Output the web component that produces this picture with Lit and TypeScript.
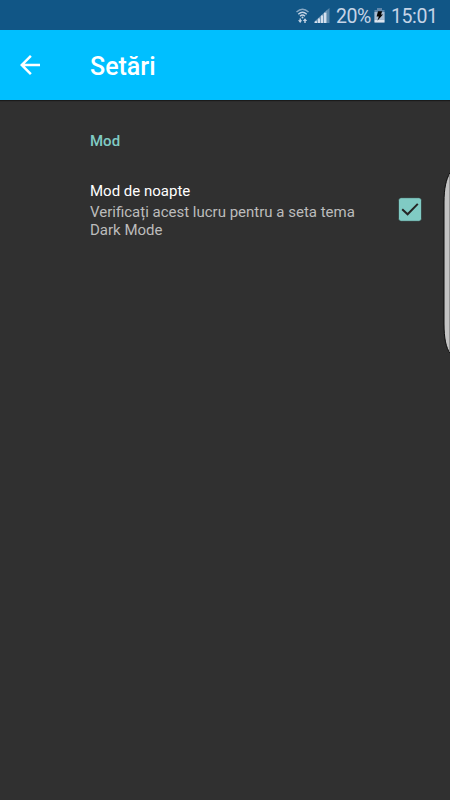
import { LitElement, html, css } from "lit";
import { customElement } from "lit/decorators.js";

@customElement("app-root")
export class AppRoot extends LitElement {
  static styles = css`
    :host {
      display: flex;
      flex-direction: column;
      position: relative;
      height: 100vh;
      overflow: hidden;
      background: #303030;
      font-family: Roboto, sans-serif;
      color: #fff;
    }
    svg { display: block; flex: none; }
    .status {
      flex: none;
      display: flex;
      align-items: center;
      box-sizing: border-box;
      height: 30px;
      padding: 1px 0 0 296px;
      background: #115686;
      color: #c5d4e6;
      font-size: 19.5px;
      line-height: 28px;
      white-space: nowrap;
    }
    .wifi { margin-right: 5px; }
    .signal { margin-right: 6px; }
    .percent { width: 38px; margin-top: 2px; letter-spacing: -0.4px; }
    .battery { margin-right: 6px; }
    .clock { margin-top: 2px; letter-spacing: -0.4px; }
    .bar {
      flex: none;
      display: flex;
      align-items: center;
      height: 70px;
      padding-left: 20px;
      background: #00bfff;
      box-shadow: 0 1px 1px #1b1b1b;
    }
    .title {
      margin: 4px 0 0 50px;
      font-size: 25px;
      line-height: 30px;
      font-weight: 500;
    }
    .content { padding: 32px 28px 0 90px; }
    .category {
      font-size: 15px;
      line-height: 18px;
      font-weight: 500;
      color: #80cbc4;
    }
    .row {
      display: flex;
      align-items: center;
      justify-content: space-between;
      margin-top: 32px;
    }
    .name { font-size: 15px; line-height: 19px; }
    .summary {
      width: 275px;
      margin-top: 2px;
      font-size: 15px;
      line-height: 18px;
      color: #bcbcbc;
    }
    .check { margin-bottom: 3px; }
    .edge {
      position: absolute;
      right: 0;
      top: 172px;
    }
  `;

  render() {
    return html`
      <div class="status">
        <svg class="wifi" width="13" height="16" viewBox="0 0 13 16" fill="none" stroke="#c5d4e6" stroke-width="1.4">
          <path d="M.5 4Q6.5-1.6 12.5 4" opacity=".65" />
          <path d="M2.3 6.2Q6.5 2.3 10.7 6.2M4 8.2Q6.5 6 9 8.2" />
          <circle cx="6.5" cy="9.6" r="1" fill="#c5d4e6" stroke="none" />
          <path d="M2 12.3L4.2 15L6.2 12.3ZM6.8 13L9 10.2L11.2 13Z" fill="#c5d4e6" stroke="none" />
          <path d="M4.2 10.4V13M9 12V15" />
        </svg>
        <svg class="signal" width="16" height="15" viewBox="0 0 16 15">
          <path d="M0 15V14L13 2V15Z" fill="#c5d4e6" opacity=".55" />
          <path d="M1 15V13.2H3V15ZM4 15V10.4H6V15ZM7 15V7.6H9V15ZM10 15V4.8H12.3V15Z" fill="#d4e0ee" />
          <path d="M13 15V2L15.5 0V15Z" fill="#c5d4e6" opacity=".4" />
        </svg>
        <span class="percent">20%</span>
        <svg class="battery" width="11" height="15" viewBox="0 0 11 15">
          <path d="M3 0H8V2H10.5V14.5H.5V2H3Z" fill="#5e86ab" />
          <path d="M.5 11.5H10.5V14.5H.5Z" fill="#dce4ee" />
          <path d="M.5 4H10.5V11.5H.5Z" fill="#a9bdd3" />
          <path d="M4 3.3H8.2L7 6.6H9L3.4 12.7L4.8 8.6H2.6Z" fill="#050505" />
        </svg>
        <span class="clock">15:01</span>
      </div>
      <header class="bar">
        <svg width="20" height="20" viewBox="4 4 16 16">
          <path fill="#fff" d="M20 11H7.83l5.59-5.59L12 4l-8 8 8 8 1.41-1.41L7.83 13H20v-2z" />
        </svg>
        <div class="title">Setări</div>
      </header>
      <main class="content">
        <div class="category">Mod</div>
        <div class="row">
          <div>
            <div class="name">Mod de noapte</div>
            <div class="summary">Verificați acest lucru pentru a seta tema Dark Mode</div>
          </div>
          <svg class="check" width="24" height="25" viewBox="0 0 24 25">
            <rect x=".5" y=".7" width="23" height="23.6" rx="2.7" fill="#80cbc4" stroke="#252525" stroke-width=".6" />
            <path d="M4.2 12.2L9.6 17.3L19.8 6.9" fill="none" stroke="#252525" stroke-width="2" />
          </svg>
        </div>
      </main>
      <svg class="edge" width="7" height="183" viewBox="0 0 7 183">
        <path d="M7 1C3 7 1 17 1 30V152C1 166 3 176 7 181Z" fill="#c3c3c3" stroke="#0c0c0c" stroke-width="1" />
        <path d="M6.5 2V180H7V2Z" fill="#c3c3c3" />
      </svg>
    `;
  }
}
